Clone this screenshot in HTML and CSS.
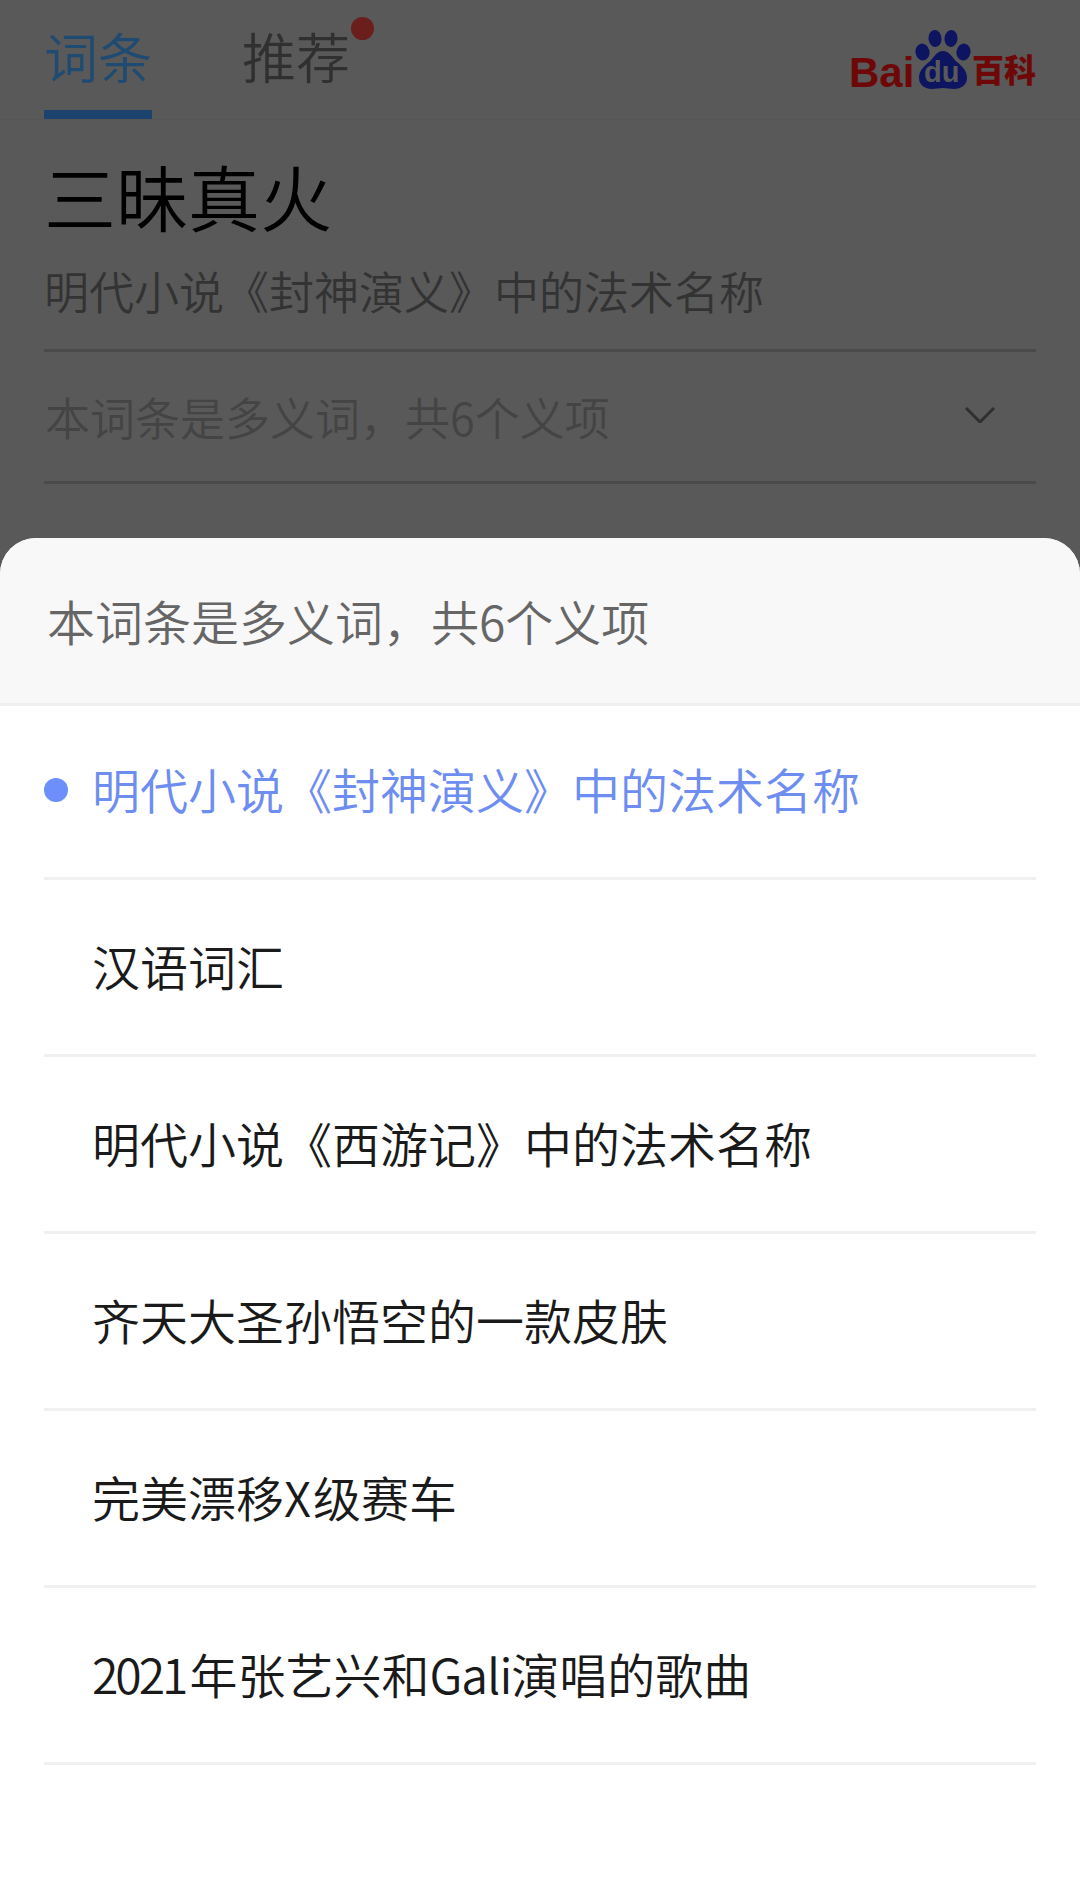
FILE: index.html
```html
<!DOCTYPE html>
<html lang="zh-CN">
<head>
<meta charset="utf-8">
<title>三昧真火</title>
<link rel="stylesheet" href="styles.css">
</head>
<body>
<div class="screen">
  <div class="behind">
    <header class="topbar">
      <nav class="tabs">
        <span class="tab tab-active">词条</span>
        <span class="tab tab-rec">推荐<i class="dot"></i></span>
      </nav>
      <div class="logo">
        <span class="logo-bai">Bai</span>
        <span class="paw">
          <svg class="paw-svg" viewBox="0 0 56 60" width="56" height="60">
            <ellipse cx="7.500" cy="22" rx="7" ry="8.500" transform="rotate(-12 7.500 22)"/>
            <ellipse cx="20" cy="8.500" rx="6.500" ry="8.500" transform="rotate(-4 20 8.500)"/>
            <ellipse cx="36" cy="8.500" rx="6.500" ry="8.500" transform="rotate(4 36 8.500)"/>
            <ellipse cx="48.500" cy="22" rx="7" ry="8.500" transform="rotate(12 48.500 22)"/>
            <path d="M28 21C21 21 19 28 14 32C8 37 4 41 4 48C4 55 10 59 17 59C21 59 24 58 28 58C32 58 35 59 39 59C46 59 52 55 52 48C52 41 48 37 42 32C37 28 35 21 28 21Z"/>
          </svg>
          <span class="logo-du">du</span>
        </span>
        <span class="logo-bk">百科</span>
      </div>
    </header>
    <section class="intro">
      <h1 class="title">三昧真火</h1>
      <p class="subtitle">明代小说《封神演义》中的法术名称</p>
    </section>
    <div class="poly-row">
      <span class="poly-text">本词条是多义词，共6个义项</span>
      <svg class="chev" viewBox="0 0 30 16" width="30" height="16"><path d="M1 1L15 15L29 1"/></svg>
    </div>
  </div>
  <section class="sheet">
    <div class="sheet-head">本词条是多义词，共6个义项</div>
    <ul class="list">
      <li class="item item-on"><i class="bullet"></i>明代小说《封神演义》中的法术名称</li>
      <li class="item">汉语词汇</li>
      <li class="item">明代小说《西游记》中的法术名称</li>
      <li class="item">齐天大圣孙悟空的一款皮肤</li>
      <li class="item">完美漂移<span class="wide">X</span>级赛车</li>
      <li class="item"><span class="narrow">2021</span>年张艺兴和<span class="narrow-soft">Gali</span>演唱的歌曲</li>
    </ul>
  </section>
</div>
</body>
</html>
```
FILE: styles.css
```css
* { box-sizing: border-box; }
html, body { margin: 0; padding: 0; }
body {
  width: 1080px;
  height: 1884px;
  overflow: hidden;
  font-family: "Noto Sans CJK SC", "Noto Sans", sans-serif;
  font-weight: 350;
}
.screen {
  display: flex;
  flex-direction: column;
  height: 1884px;
  background: #595959;
}
.behind { height: 538px; flex: none; }
.topbar {
  height: 120px;
  display: flex;
  justify-content: space-between;
  padding: 0 44px;
  border-bottom: 1px solid #565656;
}
.tabs { display: flex; gap: 90px; }
.tab {
  position: relative;
  width: 108px;
  height: 119px;
  font-size: 54px;
  line-height: 112px;
  text-align: center;
  color: #303030;
}
.tab-active {
  color: #1f4a72;
  border-bottom: 9px solid #1c436d;
}
.dot {
  position: absolute;
  left: 109px;
  top: 17px;
  width: 23px;
  height: 23px;
  border-radius: 50%;
  background: #6a1f1c;
}
.logo {
  display: flex;
  align-items: flex-start;
  color: #6e0808;
  font-family: "Liberation Sans", sans-serif;
  font-weight: 700;
  margin-top: 30px;
}
.logo-bai { font-size: 42px; line-height: 58px; margin-top: 14px; width: 66px; }
.paw { position: relative; width: 56px; height: 60px; margin-right: 1px; }
.paw-svg { display: block; fill: #0e1560; }
.logo-du {
  position: absolute;
  left: 9px;
  bottom: 3px;
  color: #595959;
  font-size: 29px;
  line-height: 30px;
}
.logo-bk {
  font-family: "Noto Sans CJK SC", sans-serif;
  font-weight: 900;
  font-size: 32px;
  line-height: 40px;
  margin-top: 18px;
}
.intro { padding: 0 44px; }
.title {
  margin: 0;
  font-size: 72px;
  line-height: 100px;
  font-weight: 350;
  color: #000;
  padding-top: 25px;
  height: 126px;
}
.subtitle {
  margin: 0;
  font-size: 45px;
  line-height: 66px;
  color: #333;
  height: 103px;
  padding-top: 12px;
}
.poly-row {
  margin: 0 44px;
  height: 135px;
  border-top: 3px solid #4a4a4a;
  border-bottom: 3px solid #4a4a4a;
  display: flex;
  align-items: center;
  justify-content: space-between;
  padding: 0 0 0 1px;
}
.poly-text { font-size: 45px; color: #444; }
.chev { margin-right: 41px; margin-top: -4px; fill: none; stroke: #303030; stroke-width: 3; }
.sheet {
  flex: 1;
  background: #fff;
  border-radius: 36px 36px 0 0;
  overflow: hidden;
}
.sheet-head {
  height: 168px;
  padding: 0 47px;
  background: #f8f8f8;
  border-bottom: 3px solid #efefef;
  font-size: 48px;
  line-height: 164px;
  color: #666;
}
.list { list-style: none; margin: 0; padding: 0 44px; }
.item {
  position: relative;
  height: 177px;
  border-bottom: 3px solid #f0f0f0;
  padding-left: 48px;
  font-size: 48px;
  line-height: 170px;
  color: #1a1a1a;
}
.item-on { color: #6d8df0; height: 174px; line-height: 164px; }
.bullet {
  position: absolute;
  left: 0;
  top: 72px;
  width: 24px;
  height: 24px;
  border-radius: 50%;
  background: #6c8ffb;
}
.narrow { letter-spacing: -3px; margin-right: 4px; }
.narrow-soft { letter-spacing: -1px; }
.wide { letter-spacing: 2px; }
```
